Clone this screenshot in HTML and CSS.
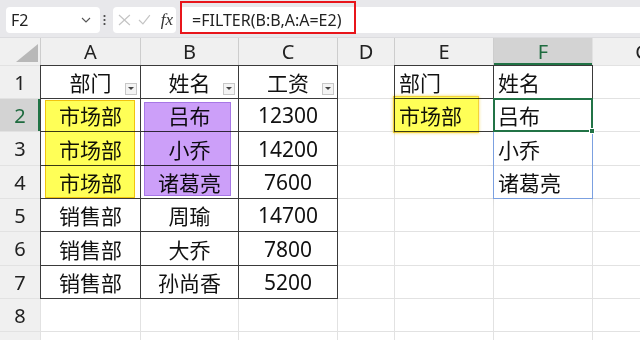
FILE: index.html
```html
<!DOCTYPE html>
<html lang="zh-CN">
<head>
  <meta charset="UTF-8">
  <title>FILTER</title>
  <link rel="stylesheet" href="styles.css">
</head>
<body>

  <div class="toolbar">
    <div class="namebox">
      <span>F2</span>
      <svg width="10" height="6" viewBox="0 0 10 6"><polyline points="1,1 5,5 9,1" fill="none" stroke="#555" stroke-width="1.1"/></svg>
    </div>
    <svg class="grip" width="13" height="12" viewBox="0 0 13 12">
      <circle cx="4.5" cy="2" r="1.1" fill="#444"/>
      <circle cx="4.5" cy="6" r="1.1" fill="#444"/>
      <circle cx="4.5" cy="10" r="1.1" fill="#444"/>
    </svg>
    <div class="fbuttons">
      <svg width="13" height="12" viewBox="0 0 13 12"><path d="M1 1 L12 11 M12 1 L1 11" stroke="#c4c4c4" stroke-width="1.2"/></svg>
      <svg width="13" height="12" viewBox="0 0 13 12"><polyline points="1,6 5,10 12,1" fill="none" stroke="#c4c4c4" stroke-width="1.2"/></svg>
      <span class="fx">fx</span>
    </div>
    <div class="formula">
      <span class="ftext">=FILTER(B:B,A:A=E2)</span>
    </div>
  </div>

  <div class="sheet">
    <div class="grid cells">
      <div class="hd corner"><svg width="22" height="18" viewBox="0 0 22 18"><polygon points="22,0 22,18 0,18" fill="#b8b8b8"/></svg></div>
      <div class="hd">A</div>
      <div class="hd">B</div>
      <div class="hd">C</div>
      <div class="hd">D</div>
      <div class="hd">E</div>
      <div class="hd hd-sel">F</div>
      <div class="hd">G</div>

      <div class="rh">1</div>
      <div class="c tb">部门<span class="filter"></span></div>
      <div class="c tb">姓名<span class="filter"></span></div>
      <div class="c tb">工资<span class="filter"></span></div>
      <div class="c"></div>
      <div class="c tb left">部门</div>
      <div class="c tb left">姓名</div>
      <div class="c"></div>

      <div class="rh rh-sel">2</div>
      <div class="c tb">市场部</div>
      <div class="c tb">吕布</div>
      <div class="c tb">12300</div>
      <div class="c"></div>
      <div class="c tb left">市场部</div>
      <div class="c left">吕布</div>
      <div class="c"></div>

      <div class="rh">3</div>
      <div class="c tb">市场部</div>
      <div class="c tb">小乔</div>
      <div class="c tb">14200</div>
      <div class="c"></div>
      <div class="c"></div>
      <div class="c left">小乔</div>
      <div class="c"></div>

      <div class="rh">4</div>
      <div class="c tb">市场部</div>
      <div class="c tb">诸葛亮</div>
      <div class="c tb">7600</div>
      <div class="c"></div>
      <div class="c"></div>
      <div class="c left">诸葛亮</div>
      <div class="c"></div>

      <div class="rh">5</div>
      <div class="c tb">销售部</div>
      <div class="c tb">周瑜</div>
      <div class="c tb">14700</div>
      <div class="c"></div>
      <div class="c"></div>
      <div class="c"></div>
      <div class="c"></div>

      <div class="rh">6</div>
      <div class="c tb">销售部</div>
      <div class="c tb">大乔</div>
      <div class="c tb">7800</div>
      <div class="c"></div>
      <div class="c"></div>
      <div class="c"></div>
      <div class="c"></div>

      <div class="rh">7</div>
      <div class="c tb">销售部</div>
      <div class="c tb">孙尚香</div>
      <div class="c tb">5200</div>
      <div class="c"></div>
      <div class="c"></div>
      <div class="c"></div>
      <div class="c"></div>

      <div class="rh">8</div>
      <div class="c"></div>
      <div class="c"></div>
      <div class="c"></div>
      <div class="c"></div>
      <div class="c"></div>
      <div class="c"></div>
      <div class="c"></div>

      <div class="rh"></div>
      <div class="c"></div>
      <div class="c"></div>
      <div class="c"></div>
      <div class="c"></div>
      <div class="c"></div>
      <div class="c"></div>
      <div class="c"></div>
    </div>

    <div class="grid marks">
      <div class="mark mark-a"></div>
      <div class="mark mark-b"></div>
      <div class="mark mark-e"></div>
      <div class="spill"></div>
      <div class="sel"></div>
    </div>
  </div>

</body>
</html>
```

FILE: styles.css
```css
body {
  margin: 0;
  width: 640px;
  height: 340px;
  overflow: hidden;
  background: #fff;
  font-family: "Noto Sans", "Noto Sans CJK SC", sans-serif;
  color: #111;
}

/* formula bar */
.toolbar {
  height: 38px;
  border-bottom: 1px solid #dcdcdf;
  background-color: #e8e8eb;
  display: flex;
  align-items: flex-start;
  padding-top: 7px;
  box-sizing: border-box;
}

.namebox {
  margin-left: 6px;
  width: 94px;
  height: 26px;
  box-sizing: border-box;
  padding: 0 9px 0 5px;
  background: #fff;
  border-radius: 4px;
  display: flex;
  align-items: center;
  justify-content: space-between;
  font-size: 16px;
  color: #222;
}

.grip {
  margin-top: 7px;
}

.fbuttons {
  width: 63px;
  height: 26px;
  box-sizing: border-box;
  padding: 0 3px 0 5px;
  background: #fff;
  border-radius: 4px;
  display: flex;
  align-items: center;
  gap: 7px;
}

.fx {
  font-family: "Liberation Serif", serif;
  font-style: italic;
  font-size: 17px;
  color: #333;
  margin-left: 3px;
}

.formula {
  flex: 1;
  margin-left: 4px;
  height: 26px;
  background: #fff;
  border-radius: 4px 0 0 4px;
  display: flex;
  align-items: center;
  padding-left: 12px;
}

.ftext {
  position: relative;
  font-size: 16px;
  color: #222;
  line-height: 26px;
}

.ftext::after {
  content: "";
  position: absolute;
  left: -12px;
  right: -15px;
  top: -6px;
  bottom: -1px;
  border: 2px solid #e8151b;
}

/* sheet */
.sheet {
  display: grid;
}

.grid {
  grid-area: 1 / 1;
  display: grid;
  grid-template-columns: 40px 99px 97px 98px 56px 98px 98px 99px;
  grid-template-rows: 27px 32px 32px 33px 32px 32px 33px 32px 32px 33px;
  gap: 1px;
}

.cells {
  background-color: #e2e2e2;
}

.hd {
  background: #f0f0f0;
  box-shadow: 1px 0 0 #cdcdcd;
  display: flex;
  align-items: center;
  justify-content: center;
  font-size: 20px;
  color: #222;
}

.corner {
  justify-content: flex-end;
  align-items: flex-end;
  padding: 0 2px 3px 0;
}

.hd-sel {
  background: #d3d3d3;
  color: #1e6b3f;
  box-shadow: inset 0 -2px 0 #217346;
}

.rh {
  background: #f0f0f0;
  display: flex;
  align-items: center;
  justify-content: center;
  font-size: 20px;
  color: #222;
}

.rh-sel {
  background: #d3d3d3;
  color: #1e6b3f;
  box-shadow: inset -2px 0 0 #217346;
}

.c {
  background: #fff;
  position: relative;
  display: flex;
  align-items: center;
  justify-content: center;
  font-size: 21px;
  color: #111;
}

.c.left {
  justify-content: flex-start;
  padding-left: 4px;
}

.tb {
  box-shadow: 0 0 0 1px #3a3a3a;
}

.filter {
  position: absolute;
  right: 3px;
  bottom: 3px;
  width: 12px;
  height: 12px;
  box-sizing: border-box;
  background: #f4f4f4;
  border: 1px solid #c8c8c8;
}

.filter::after {
  content: "";
  position: absolute;
  left: 2px;
  top: 3px;
  border-left: 3px solid transparent;
  border-right: 3px solid transparent;
  border-top: 3px solid #444;
}

/* annotation layer */
.marks {
  pointer-events: none;
}

.mark {
  mix-blend-mode: multiply;
}

.mark-a {
  grid-column: 2;
  grid-row: 3 / 6;
  margin: 1px 5px 0 4px;
  background: #ffff57;
  border: 1px solid #f1c40f;
}

.mark-b {
  grid-column: 3;
  grid-row: 3 / 6;
  margin: 3px 7px 2px 3px;
  background: #cc9ff9;
  border: 1px solid #a777e6;
}

.mark-e {
  grid-column: 6;
  grid-row: 3;
  margin: -3px 14px -2px -2px;
  background: #ffff57;
  border: 1px solid #f3d23a;
  box-shadow: 0 0 3px rgba(235, 195, 0, 0.6);
}

.spill {
  grid-column: 7;
  grid-row: 3 / 6;
  margin: -1px;
  border: 1px solid #7ba0e0;
  box-shadow: 0 4px 8px rgba(0, 0, 0, 0.06);
}

.sel {
  grid-column: 7;
  grid-row: 3;
  margin: -1px;
  border: 2px solid #217346;
  position: relative;
}

.sel::after {
  content: "";
  position: absolute;
  right: -4px;
  bottom: -4px;
  width: 4px;
  height: 4px;
  background: #217346;
  border: 1px solid #fff;
}
```
